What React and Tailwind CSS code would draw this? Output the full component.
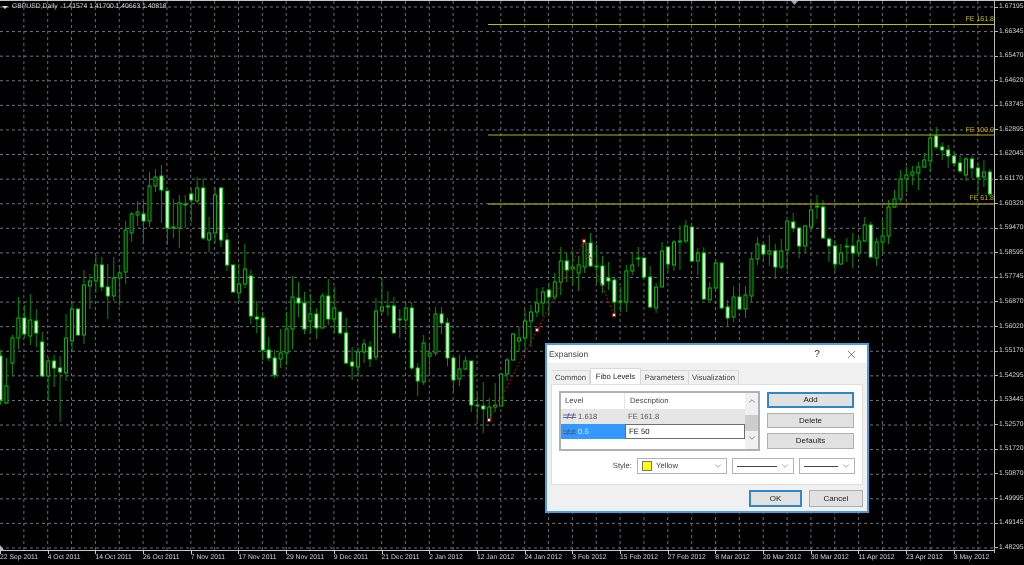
import React from 'react';
import { ChevronDown, ChevronUp, X } from 'lucide-react';

const PRICES = [
  '1.67195', '1.66345', '1.65470', '1.64620', '1.63745', '1.62895', '1.62045', '1.61170',
  '1.60320', '1.59470', '1.58595', '1.57745', '1.56870', '1.56020', '1.55170', '1.54295',
  '1.53445', '1.52570', '1.51720', '1.50870', '1.49995', '1.49145', '1.48295',
];

const DATES = [
  '22 Sep 2011', '4 Oct 2011', '14 Oct 2011', '26 Oct 2011', '7 Nov 2011', '17 Nov 2011',
  '29 Nov 2011', '9 Dec 2011', '21 Dec 2011', '2 Jan 2012', '12 Jan 2012', '24 Jan 2012',
  '3 Feb 2012', '15 Feb 2012', '27 Feb 2012', '8 Mar 2012', '20 Mar 2012', '30 Mar 2012',
  '11 Apr 2012', '23 Apr 2012', '3 May 2012',
];

// [wick top, body top, body bottom, wick bottom, white body]
const BARS = [
  [350, 356, 400, 405, 1], [358, 386, 403, 404, 0], [335, 338, 363, 376, 0], [297, 318, 338, 349, 0],
  [305, 318, 334, 338, 1], [294, 320, 336, 345, 0], [309, 321, 333, 347, 1], [332, 342, 376, 377, 1],
  [357, 361, 376, 401, 0], [355, 361, 368, 387, 1], [356, 368, 372, 422, 1], [314, 338, 373, 381, 0],
  [302, 309, 341, 351, 0], [309, 309, 335, 335, 1], [270, 285, 335, 344, 0], [274, 281, 286, 309, 0],
  [255, 265, 281, 293, 0], [257, 265, 287, 291, 1], [264, 287, 296, 319, 1], [257, 278, 296, 301, 0],
  [265, 273, 278, 306, 0], [221, 230, 272, 284, 0], [212, 214, 233, 242, 0], [201, 212, 215, 226, 0],
  [201, 214, 221, 244, 1], [172, 186, 221, 227, 0], [169, 177, 186, 192, 0], [165, 176, 190, 223, 1],
  [191, 191, 228, 245, 1], [199, 227, 228, 238, 0], [195, 203, 228, 248, 0], [195, 204, 205, 228, 0],
  [188, 194, 200, 222, 1], [177, 188, 201, 203, 0], [178, 188, 238, 240, 1], [217, 233, 240, 252, 0],
  [187, 195, 233, 243, 0], [187, 188, 240, 247, 1], [233, 240, 265, 271, 1], [265, 265, 292, 292, 1],
  [264, 284, 293, 302, 0], [244, 269, 284, 288, 0], [270, 276, 316, 324, 1], [301, 317, 319, 333, 1],
  [312, 318, 350, 360, 1], [337, 350, 358, 361, 1], [350, 358, 375, 378, 1], [329, 353, 359, 368, 0],
  [312, 329, 353, 365, 0], [276, 297, 329, 349, 0], [282, 298, 303, 317, 1], [292, 303, 329, 334, 1],
  [294, 314, 321, 333, 0], [308, 314, 328, 339, 1], [293, 296, 328, 328, 0], [279, 296, 319, 325, 1],
  [287, 308, 319, 333, 0], [312, 312, 333, 334, 1], [318, 333, 363, 364, 1], [347, 362, 366, 380, 1],
  [347, 352, 367, 377, 0], [339, 344, 352, 363, 0], [341, 347, 359, 367, 1], [298, 311, 357, 360, 0],
  [278, 307, 311, 314, 0], [291, 306, 307, 316, 0], [297, 306, 333, 333, 1], [309, 319, 320, 338, 0],
  [303, 308, 320, 330, 0], [302, 308, 368, 370, 1], [363, 368, 381, 396, 1], [335, 343, 382, 385, 0],
  [343, 353, 356, 375, 0], [307, 314, 353, 356, 0], [307, 314, 323, 334, 1], [318, 323, 358, 366, 1],
  [358, 358, 380, 392, 1], [355, 369, 379, 386, 0], [356, 361, 369, 370, 0], [361, 361, 405, 412, 1],
  [393, 405, 406, 421, 0], [382, 406, 409, 433, 1], [398, 407, 420, 420, 0], [383, 405, 407, 412, 0],
  [374, 374, 406, 406, 0], [358, 360, 374, 381, 0], [333, 334, 360, 361, 0], [327, 338, 341, 352, 0],
  [310, 321, 338, 350, 0], [305, 312, 321, 347, 0], [288, 303, 312, 317, 0], [287, 292, 303, 316, 0],
  [283, 290, 297, 315, 1], [273, 282, 297, 300, 0], [247, 261, 282, 295, 0], [253, 261, 270, 282, 1],
  [251, 267, 269, 285, 0], [256, 265, 273, 291, 0], [240, 243, 267, 273, 0], [233, 243, 266, 267, 1],
  [245, 266, 267, 283, 0], [256, 266, 285, 293, 1], [262, 278, 281, 290, 1], [278, 280, 302, 313, 1],
  [287, 301, 302, 312, 0], [265, 271, 302, 312, 0], [252, 265, 271, 275, 0], [247, 258, 259, 267, 0],
  [258, 258, 277, 277, 1], [266, 277, 307, 308, 1], [283, 287, 308, 313, 0], [242, 251, 287, 287, 0],
  [247, 247, 264, 271, 1], [240, 242, 265, 271, 0], [225, 241, 242, 270, 0], [220, 226, 241, 243, 0],
  [227, 227, 261, 261, 1], [248, 253, 261, 275, 0], [247, 253, 299, 300, 1], [282, 288, 300, 300, 0],
  [260, 263, 288, 290, 0], [262, 263, 308, 309, 1], [300, 307, 318, 327, 1], [286, 297, 317, 322, 0],
  [286, 297, 309, 310, 1], [286, 295, 309, 318, 0], [253, 259, 296, 302, 0], [237, 244, 259, 265, 0],
  [243, 245, 254, 262, 1], [235, 251, 254, 266, 0], [244, 251, 267, 279, 1], [239, 251, 267, 269, 0],
  [221, 221, 250, 270, 0], [213, 222, 228, 232, 1], [228, 228, 246, 258, 1], [225, 226, 246, 253, 0],
  [202, 210, 227, 228, 0], [195, 206, 207, 219, 0], [200, 207, 238, 239, 1], [237, 239, 246, 262, 1],
  [240, 246, 264, 271, 1], [244, 253, 264, 265, 0], [238, 246, 247, 262, 0], [233, 246, 253, 268, 1],
  [237, 241, 253, 257, 0], [217, 225, 241, 242, 0], [222, 225, 257, 258, 1], [238, 242, 258, 266, 0],
  [220, 236, 242, 253, 0], [200, 207, 236, 244, 0], [190, 199, 207, 208, 0], [170, 179, 199, 202, 0],
  [167, 175, 179, 192, 0], [166, 172, 175, 185, 0], [162, 167, 173, 190, 0], [153, 160, 167, 168, 0],
  [133, 138, 161, 172, 0], [127, 136, 147, 149, 1], [142, 147, 150, 160, 1], [145, 150, 156, 168, 1],
  [152, 156, 163, 167, 1], [155, 163, 171, 173, 1], [157, 159, 175, 181, 0], [156, 159, 168, 178, 1],
  [162, 168, 177, 194, 1], [160, 172, 177, 187, 0], [169, 172, 194, 197, 1],
];

const BAR_STEP = 5.96;
const gridYs = PRICES.map((_, i) => 7 + i * 24.59);
const gridXs = Array.from({ length: 41 }, (_, i) => (i + 1) * 23.85);
const fiboPoints = [[489, 420], [537, 330], [584, 241], [614, 315]];

const Candle = ({ bar, index }) => {
  const [hi, top, bottom, lo, white] = bar;
  const x = index * BAR_STEP + 0.5;
  return (
    <g>
      <line x1={x} x2={x} y1={hi} y2={lo} stroke="#009000" />
      <rect
        x={x - 1.5}
        y={top}
        width={3}
        height={Math.max(bottom - top, 1)}
        fill={white ? '#ffffff' : '#000000'}
        stroke={white ? '#00e000' : '#00c000'}
      />
    </g>
  );
};

const Chart = () => (
  <svg width="994" height="549" viewBox="0 1 994 549" className="block shrink-0">
    {gridYs.map((y) => (
      <line key={y} x1="0" x2="994" y1={y} y2={y} stroke="#6c7682" strokeDasharray="3 3" />
    ))}
    {gridXs.map((x) => (
      <line key={x} x1={x} x2={x} y1="1" y2="550" stroke="#626c78" strokeDasharray="3 3" />
    ))}

    {BARS.map((bar, i) => (
      <Candle key={i} bar={bar} index={i} />
    ))}

    {/* Fibo expansion */}
    <line x1="488" x2="994" y1="24.5" y2="24.5" stroke="#c0c000" />
    <line x1="488" x2="994" y1="135" y2="135" stroke="#b0b020" />
    <line x1="488" x2="994" y1="204" y2="204" stroke="#8c8c10" strokeWidth="1.5" />
    <polyline
      points={fiboPoints.map((p) => p.join(',')).join(' ')}
      fill="none"
      stroke="#d00000"
      strokeDasharray="2 2"
    />
    {fiboPoints.map(([x, y]) => (
      <rect key={x} x={x - 1.5} y={y - 1.5} width="3" height="3" fill="#ffffff" stroke="#d00000" strokeWidth="0.8" />
    ))}

    <path d="M791 1h7l-3.500 4z" fill="#9aa4b0" />
    <path d="M0 545l4 5h-4z" fill="#b8b8b8" />
  </svg>
);

const FeLabel = ({ className, children }) => (
  <span className={`absolute right-[30px] text-[7px] leading-[8px] ${className}`}>{children}</span>
);

const LevelIcon = () => (
  <svg width="13" height="8" viewBox="0 0 13 8" className="shrink-0">
    <path d="M0 3h13M0 5.500h13M4 7l2-6M9 7l2-6" stroke="#4a5f8c" strokeWidth="0.9" fill="none" />
  </svg>
);

const Button = ({ className = '', children }) => (
  <button className={`flex items-center justify-center bg-[#e1e1e1] text-[8px] text-[#222] ${className}`}>
    {children}
  </button>
);

const Combo = ({ className = '', children }) => (
  <div className={`flex h-[16px] items-center border border-[#b4b4b4] bg-white pl-[4px] pr-[3px] ${className}`}>
    <div className="flex flex-1 items-center">{children}</div>
    <ChevronDown size={10} strokeWidth={1.2} className="text-[#555]" />
  </div>
);

const Tab = ({ active, className = '', children }) => (
  <div
    className={
      active
        ? `flex h-[16px] items-center justify-center border border-b-0 border-[#d9d9d9] bg-white text-[#222] ${className}`
        : `flex h-[14px] items-center justify-center border border-b-0 border-l-0 border-[#d9d9d9] bg-[#f0f0f0] text-[#444] ${className}`
    }
  >
    {children}
  </div>
);

const LevelsList = () => (
  <div className="flex h-[60px] w-[201px] border-2 border-[#b0b0b0] bg-white text-[7.7px] text-[#444]">
    <div className="flex flex-1 flex-col">
      <div className="flex h-[16px] items-center">
        <div className="flex h-full w-[64px] items-center border-r border-[#e4e4e4] pl-[4px]">Level</div>
        <div className="pl-[5px]">Description</div>
      </div>
      <div className="flex h-[15px] items-center bg-[#e6e6e6] text-[#555]">
        <div className="flex w-[64px] items-center gap-[2px] pl-[2px]">
          <LevelIcon />
          1.618
        </div>
        <div className="pl-[3px]">FE 161.8</div>
      </div>
      <div className="flex h-[15px] items-stretch">
        <div className="flex w-[64px] items-center gap-[2px] bg-[#3399ff] pl-[2px] text-[#d8ebff]">
          <LevelIcon />
          0.5
        </div>
        <div className="flex flex-1 items-center border border-[#6e6e6e] pl-[3px] text-[#111]">FE 50</div>
      </div>
    </div>
    <div className="flex w-[13px] flex-col items-center bg-[#f0f0f0] text-[#444]">
      <ChevronUp size={10} strokeWidth={1.4} className="mt-[3px]" />
      <div className="mt-[9px] h-[16px] w-full bg-[#cdcdcd]" />
      <ChevronDown size={10} strokeWidth={1.4} className="mt-[2px]" />
    </div>
  </div>
);

const ExpansionDialog = () => (
  <div className="absolute left-[545px] top-[343px] flex h-[170px] w-[324px] flex-col border-2 border-[#4a9edc] bg-[#f0f0f0] text-[#333]">
    <div className="flex h-[18px] items-center bg-white pl-[2px] text-[8.4px] text-[#444]">
      <span>Expansion</span>
      <span className="ml-[226px] text-[10px] text-[#333]">?</span>
      <X size={13} strokeWidth={1} className="ml-[25px] text-[#222]" />
    </div>

    <div className="flex flex-1 flex-col pl-[4px] pt-[5px] text-[7.7px]">
      <div className="flex h-[16px] items-end pl-[1px]">
        <Tab className="w-[38px] border-l">Common</Tab>
        <Tab active className="w-[51px]">Fibo Levels</Tab>
        <Tab className="w-[48px]">Parameters</Tab>
        <Tab className="w-[50px]">Visualization</Tab>
      </div>

      <div className="h-[101px] w-[312px] border border-[#dedede] bg-white pl-[7px] pt-[6px]">
        <div className="flex gap-[7px]">
          <LevelsList />
          <div className="flex w-[87px] flex-col gap-[5px] pt-[1px]">
            <Button className="h-[16px] border-2 border-[#2f86c8]">Add</Button>
            <Button className="h-[15px] border border-[#b0b0b0]">Delete</Button>
            <Button className="h-[16px] border border-[#b0b0b0]">Defaults</Button>
          </div>
        </div>

        <div className="mt-[7px] flex items-center justify-end gap-[5px] pr-[7px] text-[#444]">
          <span>Style:</span>
          <Combo className="w-[90px]">
            <span className="mr-[4px] h-[10px] w-[10px] border border-[#777] bg-[#ffff00]" />
            Yellow
          </Combo>
          <Combo className="w-[62px]">
            <span className="h-px w-[40px] bg-[#444]" />
          </Combo>
          <Combo className="w-[56px]">
            <span className="h-px w-[34px] bg-[#444]" />
          </Combo>
        </div>
      </div>

      <div className="flex justify-end gap-[7px] pr-[4px] pt-[5px]">
        <Button className="h-[17px] w-[53px] border-2 border-[#2f86c8]">OK</Button>
        <Button className="h-[17px] w-[54px] border border-[#b0b0b0]">Cancel</Button>
      </div>
    </div>
  </div>
);

export default function App() {
  return (
    <div className="relative flex h-[565px] w-[1024px] flex-col overflow-hidden bg-black font-['Liberation_Sans',sans-serif] text-[6.8px] text-[#d0d0d0] blur-[0.35px] [text-rendering:geometricPrecision]">
      <div className="h-px shrink-0 bg-[#c8c8c8]" />

      <div className="flex h-[549px] shrink-0">
        <Chart />
        <div className="flex h-[552px] flex-1 flex-col justify-between border-l border-[#b8b8b8] pt-px">
          {PRICES.map((price) => (
            <div key={price} className="flex h-[10px] items-center gap-[1px] leading-[10px]">
              <span className="h-px w-[3px] bg-[#b8b8b8]" />
              {price}
            </div>
          ))}
        </div>
      </div>

      <div className="flex h-[15px] w-[994px] border-t border-[#c8c8c8]">
        {DATES.map((date) => (
          <div key={date} className="w-[47.7px] shrink-0 whitespace-nowrap">
            <span className="block h-[3px] w-px bg-[#c8c8c8]" />
            <span className="block leading-[7px]">{date}</span>
          </div>
        ))}
      </div>

      {/* Chart caption and object labels sit over the plot */}
      <div className="absolute left-[2px] top-[3px] flex items-center leading-[8px]">
        <span className="mr-[4px] h-0 w-0 border-x-[3px] border-t-[3px] border-x-transparent border-t-[#d8d8d8]" />
        <span className="mr-[5px]">GBPUSD,Daily</span>
        <span className="whitespace-pre">1.41574 1.41700 1.40663 1.40818</span>
      </div>
      <FeLabel className="top-[16px] text-[#c8c800]">FE 161.8</FeLabel>
      <FeLabel className="top-[127px] text-[#d8a800]">FE 100.0</FeLabel>
      <FeLabel className="top-[195px] text-[#c8b400]">FE 61.8</FeLabel>

      <ExpansionDialog />
    </div>
  );
}
